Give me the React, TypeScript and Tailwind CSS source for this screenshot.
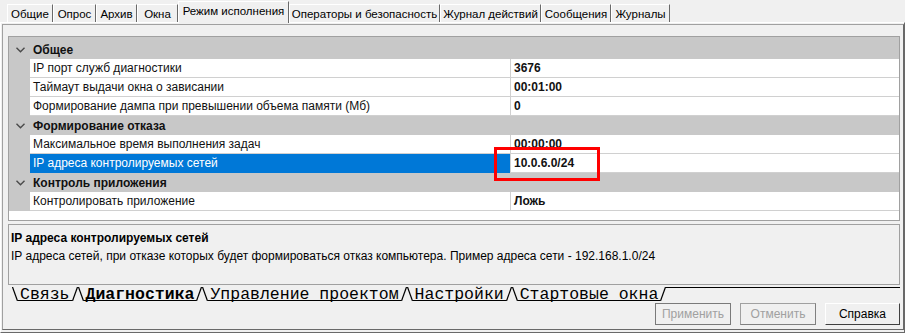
import React from "react";

const topTabs = [
  { name: "Общие", w: 46 },
  { name: "Опрос", w: 43 },
  { name: "Архив", w: 41 },
  { name: "Окна", w: 41 },
  { name: "Режим исполнения", w: 111, active: true },
  { name: "Операторы и безопасность", w: 151 },
  { name: "Журнал действий", w: 101 },
  { name: "Сообщения", w: 70 },
  { name: "Журналы", w: 59 },
];

type Row =
  | { kind: "cat"; label: string }
  | { kind: "prop"; label: string; value: string; selected?: boolean };

const rows: Row[] = [
  { kind: "cat", label: "Общее" },
  { kind: "prop", label: "IP порт служб диагностики", value: "3676" },
  { kind: "prop", label: "Таймаут выдачи окна о зависании", value: "00:01:00" },
  { kind: "prop", label: "Формирование дампа при превышении объема памяти (Мб)", value: "0" },
  { kind: "cat", label: "Формирование отказа" },
  { kind: "prop", label: "Максимальное время выполнения задач", value: "00:00:00" },
  { kind: "prop", label: "IP адреса контролируемых сетей", value: "10.0.6.0/24", selected: true },
  { kind: "cat", label: "Контроль приложения" },
  { kind: "prop", label: "Контролировать приложение", value: "Ложь" },
];

const bottomTabs = [
  { name: "Связь" },
  { name: "Диагностика", active: true },
  { name: "Управление проектом" },
  { name: "Настройки" },
  { name: "Стартовые окна" },
];

function Chevron() {
  return (
    <svg width="9" height="6" viewBox="0 0 9 6" className="block">
      <path d="M0.5 0.8 L4.5 4.8 L8.5 0.8" fill="none" stroke="#4a4a4a" strokeWidth="1.4" />
    </svg>
  );
}

function Slash({ dir }: { dir: "l" | "r" }) {
  return (
    <svg width="6" height="14" viewBox="0 0 6 14" className="block shrink-0">
      {dir === "l" ? (
        <line x1="0.5" y1="0" x2="5.5" y2="14" stroke="#000" strokeWidth="1.2" />
      ) : (
        <line x1="0.5" y1="14" x2="5.5" y2="0" stroke="#000" strokeWidth="1.2" />
      )}
    </svg>
  );
}

function GridRow({ row }: { row: Row }) {
  if (row.kind === "cat") {
    return (
      <div className="flex h-[19px] items-center bg-[#c8c8c8]">
        <div className="flex w-[21px] shrink-0 justify-center pl-[1px]">
          <Chevron />
        </div>
        <div className="pl-[3px] font-bold text-[#111]">{row.label}</div>
      </div>
    );
  }
  return (
    <div className="flex h-[19px]">
      <div className="w-[21px] shrink-0 bg-[#c8c8c8]" />
      <div
        className={
          row.selected
            ? "flex w-[480px] shrink-0 items-center border-b border-[#0078d7] bg-[#0078d7] pl-[3px] text-white"
            : "flex w-[480px] shrink-0 items-center border-b border-[#d0d0d0] bg-white pl-[3px] text-[#111]"
        }
      >
        {row.label}
      </div>
      <div className="flex flex-1 items-center border-b border-l border-[#d0d0d0] bg-white pl-[3px] font-bold text-[#111]">
        {row.value}
      </div>
    </div>
  );
}

export default function App() {
  return (
    <div className="relative h-[333px] w-[905px] overflow-hidden bg-[#f0f0f0] text-[12px] leading-none text-black [font-family:'Liberation_Sans',Arial,sans-serif]">
      {/* top tab strip */}
      <div className="flex h-[22px] items-end pl-[7px] text-[11.5px]">
        {topTabs.map((t) =>
          t.active ? (
            <div
              key={t.name}
              style={{ width: t.w }}
              className="relative z-10 -mb-[1px] flex h-[22px] shrink-0 items-center justify-center whitespace-nowrap border-l border-t border-white border-r-[1px] border-r-[#696969] bg-[#f0f0f0] pb-[2px]"
            >
              {t.name}
            </div>
          ) : (
            <div
              key={t.name}
              style={{ width: t.w }}
              className="flex h-[18px] shrink-0 items-center justify-center whitespace-nowrap border-l border-t border-white border-r-[1px] border-r-[#696969] bg-[#f0f0f0] pt-[2px]"
            >
              {t.name}
            </div>
          )
        )}
      </div>

      {/* tab page */}
      <div className="h-[311px] border-l border-t border-white border-b border-r border-b-[#696969] border-r-[#696969] pl-[1px]">
        <div className="mt-[1px] flex h-[306px] flex-col border border-[#a0a0a0] border-b-[#696969] border-r-[#696969] pl-[5px] pr-[3px] pt-[11px]">
          {/* property grid */}
          <div className="relative flex h-[185px] flex-col border border-[#a0a0a0] bg-white">
            <div className="h-[3px] bg-[#c8c8c8]" />
            {rows.map((r) => (
              <GridRow key={r.label} row={r} />
            ))}
          </div>

          {/* help panel */}
          <div className="mt-[3px] flex h-[61px] flex-col border border-[#a0a0a0] bg-[#f0f0f0] px-[2px] pt-[7px]">
            <div className="font-bold">IP адреса контролируемых сетей</div>
            <div className="mt-[6px]">
              IP адреса сетей, при отказе которых будет формироваться отказ компьютера. Пример адреса сети - 192.168.1.0/24
            </div>
          </div>

          {/* bottom sheet tabs */}
          <div className="mt-[2px] flex h-[14px] items-start pl-[4px] text-[16.5px] [font-family:'Liberation_Mono','Courier_New',monospace]">
            {bottomTabs.map((t) => (
              <div key={t.name} className="flex h-[14px]">
                <Slash dir="l" />
                <div
                  className={
                    t.active
                      ? "flex items-end overflow-visible border-b border-black px-[2px] font-bold leading-none"
                      : "flex items-end overflow-visible border-b border-black px-[2px] leading-none"
                  }
                >
                  <span className="mb-[-3px] whitespace-pre">{t.name}</span>
                </div>
                <Slash dir="r" />
              </div>
            ))}
            <div className="h-[1px] flex-1 bg-black" />
          </div>

          {/* buttons */}
          <div className="mt-[2px] flex justify-end gap-[9px]">
            <button className="h-[22px] w-[76px] border border-[#7a7a7a] bg-[#f0f0f0] text-[#a0a0a0]">
              Применить
            </button>
            <button className="h-[22px] w-[76px] border border-[#a0a0a0] border-b-[#808080] border-r-[#808080] bg-[#f0f0f0] text-[#a0a0a0]">
              Отменить
            </button>
            <button className="h-[22px] w-[75px] border border-white border-b-[#404040] border-r-[#404040] bg-[#f0f0f0] text-black">
              Справка
            </button>
          </div>
        </div>
      </div>

      {/* annotation frame */}
      <div className="absolute left-[494px] top-[147px] h-[34px] w-[106px] border-[3px] border-[#ff0000]" />
    </div>
  );
}
